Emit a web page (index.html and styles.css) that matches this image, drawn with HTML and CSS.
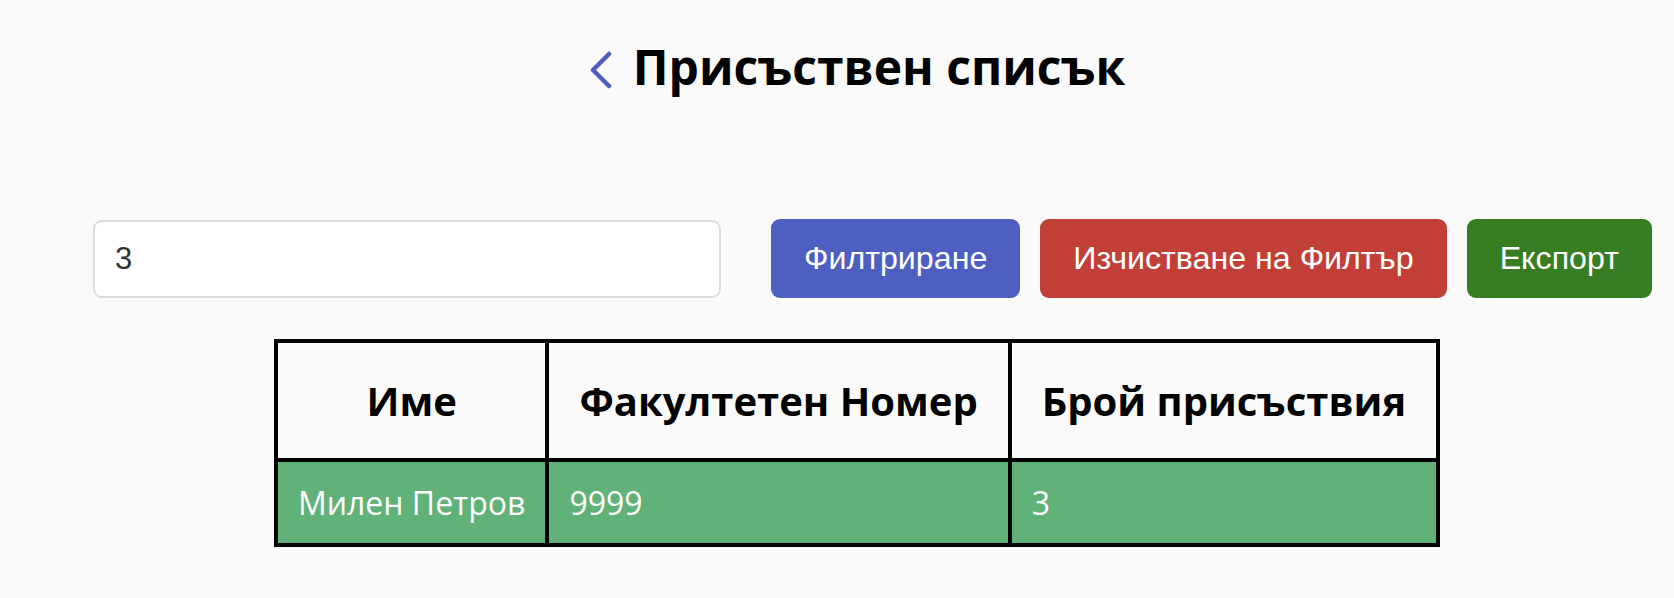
FILE: index.html
```html
<!DOCTYPE html>
<html lang="bg">
<head>
<meta charset="utf-8">
<title>Присъствен списък</title>
<link rel="stylesheet" href="styles.css">
</head>
<body>
<main class="page">
  <header class="title-bar">
    <a class="back" href="#" aria-label="Назад">
      <svg width="24" height="38" viewBox="0 0 24 38" fill="none">
        <path d="M20 3 L4 19 L20 35" stroke="#4E5FC1" stroke-width="4.5" stroke-linecap="round" stroke-linejoin="round"/>
      </svg>
    </a>
    <h1 class="title">Присъствен списък</h1>
  </header>

  <section class="filter-row">
    <input class="filter-input" type="text" value="3">
    <div class="actions">
      <button class="btn btn-blue">Филтриране</button>
      <button class="btn btn-red">Изчистване на Филтър</button>
      <button class="btn btn-green">Експорт</button>
    </div>
  </section>

  <table class="attendance">
    <thead>
      <tr>
        <th>Име</th>
        <th>Факултетен Номер</th>
        <th>Брой присъствия</th>
      </tr>
    </thead>
    <tbody>
      <tr class="row-ok">
        <td>Милен Петров</td>
        <td>9999</td>
        <td>3</td>
      </tr>
    </tbody>
  </table>
</main>
</body>
</html>
```

FILE: styles.css
```css
html, body {
  margin: 0;
  padding: 0;
  background: #fafafa;
}

body {
  font-family: "Open Sans", "Noto Sans", sans-serif;
  color: #000;
}

.page {
  padding-left: 40px;
}

.title-bar {
  display: flex;
  align-items: center;
  justify-content: center;
  gap: 20px;
  padding-top: 34px;
}

.back {
  display: flex;
  align-items: center;
  margin-top: 6px;
}

.title {
  margin: 0;
  font-size: 48px;
  font-weight: 700;
  line-height: normal;
}

.filter-row {
  display: flex;
  align-items: center;
  margin-top: 120px;
  margin-left: 53px;
}

.filter-input {
  box-sizing: border-box;
  width: 628px;
  height: 78px;
  margin-right: 50px;
  padding: 0 20px;
  border: 2px solid #dcdcdc;
  border-radius: 9px;
  background: #fff;
  font-family: "Liberation Sans", Arial, sans-serif;
  font-size: 31px;
  color: #333;
  outline: none;
}

.actions {
  display: flex;
  gap: 20px;
}

.btn {
  height: 79px;
  padding: 0 33px;
  border: none;
  border-radius: 9px;
  color: #fff;
  font-family: "Liberation Sans", Arial, sans-serif;
  font-size: 32.2px;
  cursor: pointer;
}

.btn-blue { background: #4e5fc1; }
.btn-red { background: #c23f38; }
.btn-green { background: #377d22; }

.attendance {
  margin: 41px auto 0;
  border: 2px solid #000;
  border-spacing: 0;
}

.attendance th,
.attendance td {
  border: 2px solid #000;
  line-height: normal;
}

.attendance th {
  padding: 30px;
  font-size: 40px;
  font-weight: 700;
  text-align: center;
}

.attendance td {
  padding: 19px 20px;
  font-size: 32px;
  text-align: left;
  color: #fff;
}

.row-ok {
  background: #60b279;
}
```
